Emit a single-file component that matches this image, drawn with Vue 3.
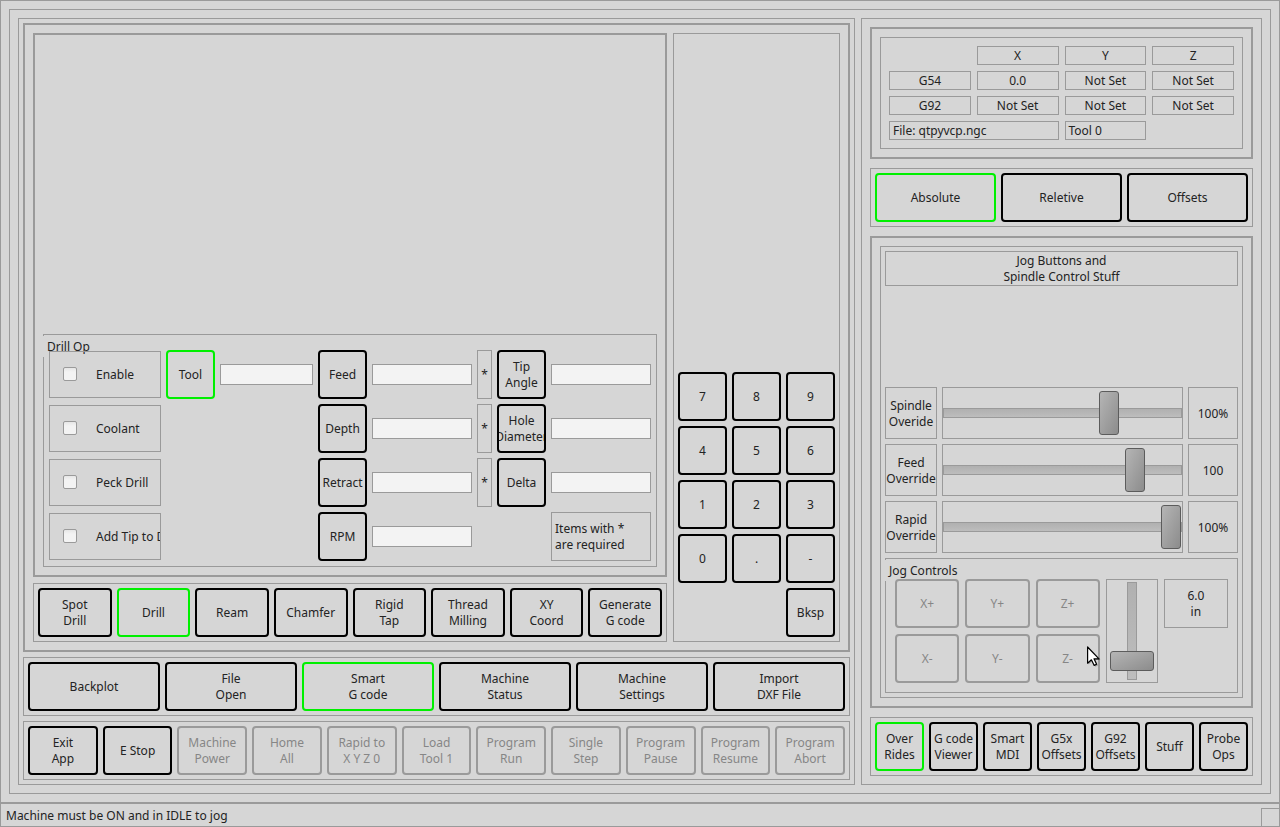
<script setup>
import { ref } from 'vue'

const operations = ['Spot\nDrill', 'Drill', 'Ream', 'Chamfer', 'Rigid\nTap', 'Thread\nMilling', 'XY\nCoord', 'Generate\nG code']
const pages = ['Backplot', 'File\nOpen', 'Smart\nG code', 'Machine\nStatus', 'Machine\nSettings', 'Import\nDXF File']
const coordinateModes = ['Absolute', 'Reletive', 'Offsets']
const sidePages = ['Over\nRides', 'G code\nViewer', 'Smart\nMDI', 'G5x\nOffsets', 'G92\nOffsets', 'Stuff', 'Probe\nOps']
const keys = ['7', '8', '9', '4', '5', '6', '1', '2', '3', '0', '.', '-']
const commands = [
  { text: 'Exit\nApp', enabled: true },
  { text: 'E Stop', enabled: true },
  { text: 'Machine\nPower' },
  { text: 'Home\nAll' },
  { text: 'Rapid to\nX Y Z 0' },
  { text: 'Load\nTool 1' },
  { text: 'Program\nRun' },
  { text: 'Single\nStep' },
  { text: 'Program\nPause' },
  { text: 'Program\nResume' },
  { text: 'Program\nAbort' },
]

const options = [
  { id: 'enable', text: 'Enable' },
  { id: 'coolant', text: 'Coolant' },
  { id: 'peck', text: 'Peck Drill' },
  { id: 'tip', text: 'Add Tip to Depth' },
]
const toolFields = [{ text: 'Tool', name: 'Tool' }]
const feedFields = [
  { text: 'Feed', required: true },
  { text: 'Depth', required: true },
  { text: 'Retract', required: true },
  { text: 'RPM', required: false },
]
const holeFields = [{ text: 'Tip\nAngle' }, { text: 'Hole\nDiameter' }, { text: 'Delta' }]

const overrides = ref([
  { id: 'spindle', text: 'Spindle\nOveride', max: 140, value: 100, shown: '100%' },
  { id: 'feed', text: 'Feed\nOverride', max: 120, value: 100, shown: '100' },
  { id: 'rapid', text: 'Rapid\nOverride', max: 100, value: 100, shown: '100%' },
])
const jogSpeed = ref(6)

const operation = ref(1)
const page = ref(2)
const mode = ref(0)
const sidePage = ref(0)
const field = ref('Tool')
</script>

<template>
  <div class="window">
    <div class="central">
      <main class="split">
        <section class="panel left">
          <div class="stack thick body">
            <div class="editor">
              <div class="thick canvas">
                <section class="group" aria-labelledby="drill-title">
                  <h2 id="drill-title" class="group-title">Drill Op</h2>
                  <div class="drill-grid">
                    <label v-for="o in options" :key="o.id" class="option" :for="o.id">
                      <input :id="o.id" type="checkbox" />
                      <span>{{ o.text }}</span>
                    </label>
                    <template v-for="f in toolFields" :key="f.name">
                      <button class="btn col-tool" :class="{ on: field === f.name }" @click="field = f.name">{{ f.text }}</button>
                      <input class="entry col-tool-entry" type="text" :aria-label="f.name" />
                    </template>
                    <template v-for="f in feedFields" :key="f.text">
                      <button class="btn col-feed" :class="{ on: field === f.text }" @click="field = f.text">{{ f.text }}</button>
                      <input class="entry col-feed-entry" type="text" :aria-label="f.text" />
                      <span v-if="f.required" class="cell star">*</span>
                    </template>
                    <template v-for="f in holeFields" :key="f.text">
                      <button class="btn col-hole" :class="{ on: field === f.text }" @click="field = f.text"><span>{{ f.text }}</span></button>
                      <input class="entry col-hole-entry" type="text" :aria-label="f.text" />
                    </template>
                    <p class="cell note">{{ 'Items with *\nare required' }}</p>
                  </div>
                </section>
              </div>
              <nav class="bar">
                <button v-for="(t, i) in operations" :key="t" class="btn" :class="{ on: operation === i }" @click="operation = i">{{ t }}</button>
              </nav>
            </div>
            <div class="keypad">
              <button v-for="k in keys" :key="k" class="btn">{{ k }}</button>
              <button class="btn backspace">Bksp</button>
            </div>
          </div>
          <nav class="bar">
            <button v-for="(t, i) in pages" :key="t" class="btn" :class="{ on: page === i }" @click="page = i">{{ t }}</button>
          </nav>
          <div class="bar">
            <button v-for="c in commands" :key="c.text" class="btn" :disabled="!c.enabled">{{ c.text }}</button>
          </div>
        </section>

        <section class="panel right">
          <div class="thick">
            <div class="readout">
              <table>
                <tbody>
                  <tr><td class="blank"></td><th scope="col">X</th><th scope="col">Y</th><th scope="col">Z</th></tr>
                  <tr><th scope="row">G54</th><td>0.0</td><td>Not Set</td><td>Not Set</td></tr>
                  <tr><th scope="row">G92</th><td>Not Set</td><td>Not Set</td><td>Not Set</td></tr>
                  <tr><td colspan="2" class="start">File: qtpyvcp.ngc</td><td class="start">Tool 0</td><td class="blank"></td></tr>
                </tbody>
              </table>
            </div>
          </div>
          <nav class="bar">
            <button v-for="(t, i) in coordinateModes" :key="t" class="btn" :class="{ on: mode === i }" @click="mode = i">{{ t }}</button>
          </nav>
          <div class="thick body">
            <div class="controls">
              <p class="cell heading">{{ 'Jog Buttons and\nSpindle Control Stuff' }}</p>
              <div class="spacer"></div>
              <div v-for="o in overrides" :key="o.id" class="override">
                <label class="cell" :for="o.id">{{ o.text }}</label>
                <div class="slider">
                  <input :id="o.id" v-model.number="o.value" class="range" type="range" min="0" :max="o.max" />
                </div>
                <output class="cell" :for="o.id">{{ o.shown }}</output>
              </div>
              <section class="group" aria-labelledby="jog-title">
                <h2 id="jog-title" class="group-title">Jog Controls</h2>
                <div class="jog-grid">
                  <button class="btn" disabled>X+</button>
                  <button class="btn" disabled>Y+</button>
                  <button class="btn" disabled>Z+</button>
                  <div class="slider upright">
                    <input id="jog-speed" v-model.number="jogSpeed" class="range vertical" type="range" min="0" max="60" aria-label="Jog speed" />
                  </div>
                  <output class="cell" for="jog-speed">{{ jogSpeed.toFixed(1) + '\nin' }}</output>
                  <button class="btn" disabled>X-</button>
                  <button class="btn" disabled>Y-</button>
                  <div class="pointed">
                    <button class="btn" disabled>Z-</button>
                    <svg class="pointer" width="14" height="22" viewBox="0 0 14 22" aria-hidden="true">
                      <path d="M1.5 2.5V18.5L5.5 15L8.3 20.8L11 19.5L8.5 14H13.5Z" fill="#000" opacity=".25" />
                      <path d="M.6 1V17.2L4.4 13.8L7.2 19.4L9.6 18.2L7 12.8H12Z" fill="#fff" stroke="#000" stroke-width="1.2" stroke-linejoin="round" />
                    </svg>
                  </div>
                </div>
              </section>
            </div>
          </div>
          <nav class="bar">
            <button v-for="(t, i) in sidePages" :key="t" class="btn" :class="{ on: sidePage === i }" @click="sidePage = i">{{ t }}</button>
          </nav>
        </section>
      </main>
    </div>
    <footer class="status">
      <span>Machine must be ON and in IDLE to jog</span>
      <i class="grip"></i>
    </footer>
  </div>
</template>

<style>
body {
  background: #d6d6d6;
}
</style>

<style scoped>
.window,
.window * {
  box-sizing: border-box;
}
.window {
  --line: #9a9a9a;
  --face: #d6d6d6;
  display: flex;
  flex-direction: column;
  min-height: 100vh;
  background: var(--face);
  color: #232323;
  font: 12px/16px "Noto Sans", sans-serif;
}
.window p,
.window h2 {
  margin: 0;
  font-size: 12px;
  font-weight: 400;
}
.central {
  flex: 1;
  display: flex;
  padding: 8px;
  border: 1px solid var(--line);
}
.split {
  flex: 1;
  display: grid;
  grid-template-columns: 837fr 401fr;
  gap: 6px;
  padding: 8px;
  border: 1px solid var(--line);
}
.panel {
  display: flex;
  flex-direction: column;
  min-width: 0;
  border: 1px solid var(--line);
}
.left {
  gap: 5px;
  padding: 4px;
}
.right {
  gap: 9px;
  padding: 8px;
}
.thick {
  padding: 8px;
  border: 2px solid var(--line);
}
.body {
  flex: 1;
  display: flex;
}
.stack {
  gap: 6px;
}
.editor {
  flex: 1;
  display: flex;
  flex-direction: column;
  gap: 6px;
  min-width: 0;
}
.canvas {
  flex: 1;
  display: flex;
  flex-direction: column;
  justify-content: flex-end;
}

.bar {
  display: grid;
  grid-auto-flow: column;
  grid-auto-columns: minmax(0, 1fr);
  gap: 5px;
  padding: 4px;
  border: 1px solid var(--line);
}
.btn {
  display: flex;
  align-items: center;
  justify-content: center;
  width: 100%;
  min-width: 0;
  height: 49px;
  padding: 0;
  overflow: hidden;
  border: 2px solid #000;
  border-radius: 4px;
  background: var(--face);
  color: inherit;
  font: inherit;
  text-align: center;
  white-space: pre;
}
.btn.on {
  border-color: #00f000;
}
.btn:disabled {
  border-color: var(--line);
  color: #868686;
}
.keypad {
  display: grid;
  grid-template-columns: repeat(3, 49px);
  align-content: end;
  gap: 5px;
  padding: 4px;
  border: 1px solid var(--line);
}
.backspace {
  grid-column: 3;
}

.cell {
  display: flex;
  align-items: center;
  justify-content: center;
  border: 1px solid var(--line);
  text-align: center;
  white-space: pre;
}
.group {
  position: relative;
  border: 1px solid var(--line);
}
.group-title {
  position: absolute;
  top: 1px;
  left: -1px;
  padding: 3px 4px 2px;
  background: var(--face);
}

.drill-grid {
  position: relative;
  display: grid;
  grid-template-columns: 112px 49px 93fr 49px 100fr 15px 49px 100fr;
  grid-template-rows: repeat(4, 49px);
  grid-auto-flow: column;
  align-items: center;
  gap: 5px;
  padding: 15px 5px 5px;
}
.option {
  grid-column: 1;
  display: flex;
  align-items: center;
  gap: 19px;
  height: 47px;
  padding-left: 13px;
  overflow: hidden;
  border: 1px solid var(--line);
  white-space: nowrap;
}
.option input {
  appearance: none;
  flex: none;
  width: 14px;
  height: 14px;
  margin: 0 0 1px;
  border: 1px solid var(--line);
  border-radius: 2px;
  background: linear-gradient(#e6e6e6, #f3f3f3 4px);
}
.option input:checked {
  background: #666;
}
.col-tool { grid-column: 2; }
.col-tool-entry { grid-column: 3; }
.col-feed { grid-column: 4; }
.col-feed-entry { grid-column: 5; }
.star {
  grid-column: 6;
  height: 49px;
}
.col-hole { grid-column: 7; }
.col-hole-entry { grid-column: 8; }
.entry {
  width: 100%;
  min-width: 0;
  height: 21px;
  padding: 0 3px;
  border: 1px solid var(--line);
  border-radius: 0;
  background: #f3f3f3;
  color: inherit;
  font: inherit;
}
.note {
  grid-column: 8;
  justify-content: flex-start;
  height: 49px;
  padding-left: 3px;
  text-align: left;
}

.readout {
  padding: 2px;
  border: 1px solid var(--line);
}
.readout table {
  width: 100%;
  border-spacing: 6px;
  table-layout: fixed;
}
.readout th,
.readout td {
  height: 19px;
  padding: 0 3px;
  border: 1px solid var(--line);
  font-weight: 400;
  text-align: center;
}
.readout .start {
  text-align: left;
}
.readout .blank {
  border: 0;
}

.controls {
  flex: 1;
  display: flex;
  flex-direction: column;
  gap: 5px;
  padding: 4px;
  border: 1px solid var(--line);
}
.heading {
  height: 35px;
}
.spacer {
  flex: 1;
}
.override {
  display: grid;
  grid-template-columns: 52px 1fr 50px;
  grid-auto-rows: 52px;
  gap: 5px;
}
.override .cell {
  padding-top: 2px;
}
.slider {
  display: flex;
  min-width: 0;
  border: 1px solid var(--line);
}
.range {
  appearance: none;
  width: 100%;
  min-width: 0;
  height: 100%;
  margin: 0;
  background: none;
}
.range::-webkit-slider-runnable-track {
  height: 10px;
  border: 1px solid var(--line);
  background: linear-gradient(#b0b0b0, #bdbdbd);
}
.range::-webkit-slider-thumb {
  appearance: none;
  width: 20px;
  height: 44px;
  margin-top: -18px;
  border: 1px solid #5c5c5c;
  border-radius: 3px;
  background: linear-gradient(to bottom right, #b5b5b5, #8c8c8c);
}
.jog-grid {
  position: relative;
  display: grid;
  grid-template-columns: repeat(3, minmax(0, 1fr)) 52px minmax(0, 1fr);
  grid-template-rows: repeat(2, 49px);
  gap: 6px;
  padding: 20px 9px 9px;
}
.upright {
  grid-row: 1 / 3;
  grid-column: 4;
  padding: 2px 0;
}
.vertical {
  writing-mode: vertical-lr;
  direction: rtl;
}
.vertical::-webkit-slider-runnable-track {
  width: 10px;
  height: 100%;
}
.vertical::-webkit-slider-thumb {
  width: 44px;
  height: 20px;
  margin-top: 0;
  margin-left: -18px;
}
.pointed {
  position: relative;
}
.pointer {
  position: absolute;
  top: 12px;
  left: 51px;
}

.status {
  display: flex;
  align-items: center;
  justify-content: space-between;
  height: 24px;
  padding: 2px 0 0 5px;
  border: 1px solid var(--line);
}
.grip {
  align-self: flex-end;
  width: 18px;
  height: 18px;
  border: solid var(--line);
  border-width: 1px 0 0 1px;
}
</style>
